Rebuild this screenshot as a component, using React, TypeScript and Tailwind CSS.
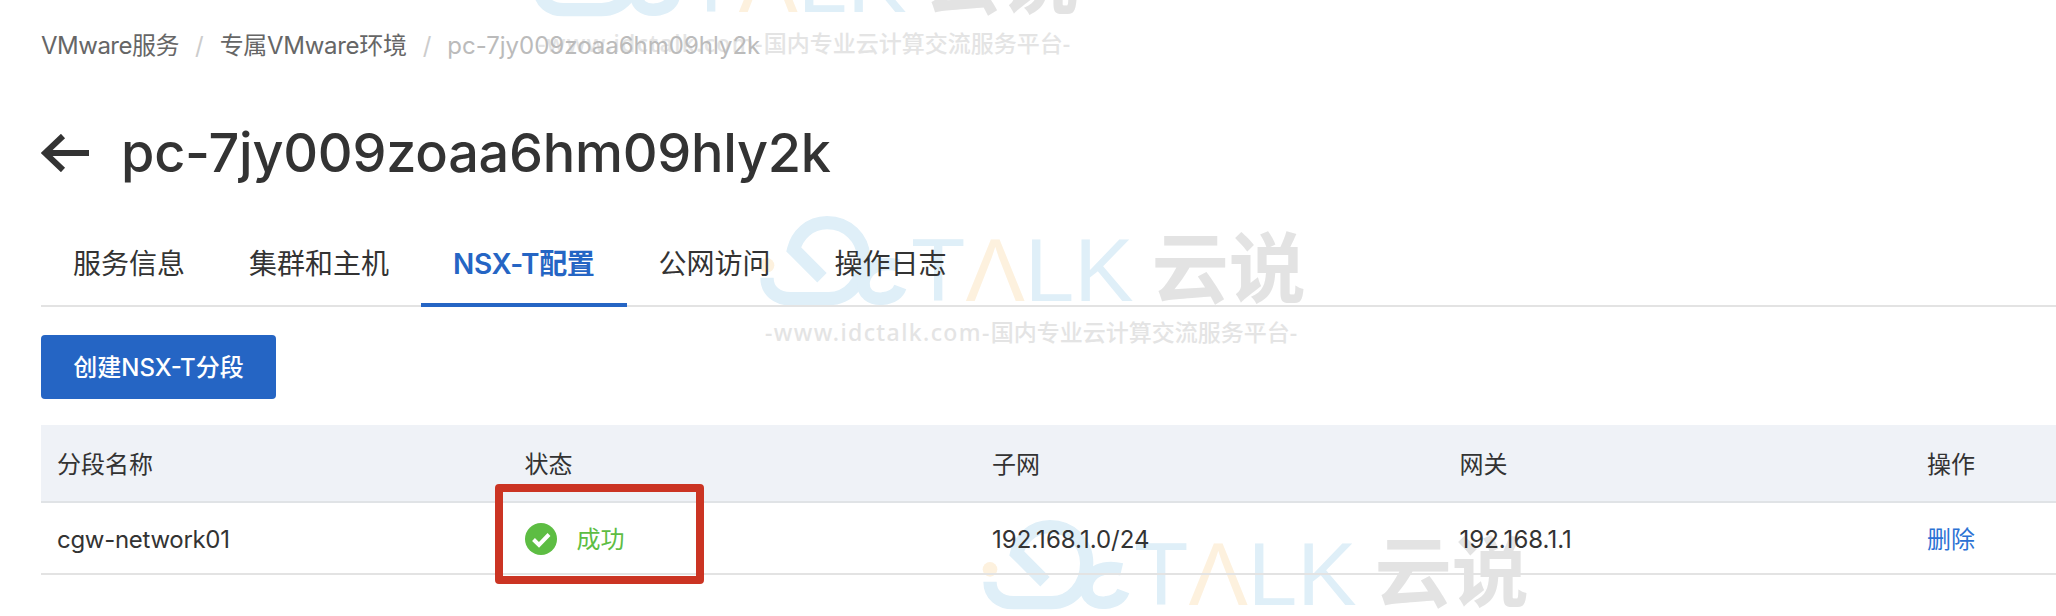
import { ReactNode } from "react";

const columns = ["分段名称", "状态", "子网", "网关", "操作"];
const tabs = ["服务信息", "集群和主机", "NSX-T配置", "公网访问", "操作日志"];

function Watermark({ className }: { className: string }) {
  return (
    <div className={"absolute flex flex-col pointer-events-none " + className}>
      <div className="flex h-[106px] items-start">
        <svg width="170" height="106" viewBox="0 0 510 318" fill="none" className="shrink-0">
          <circle cx="60" cy="178" r="22" fill="#fdf1de" />
          <path
            d="M60 215 C60 255 90 278 130 278 L245 278 C305 278 350 225 350 160 C350 95 300 50 240 50 C185 50 150 90 140 130 L225 215"
            stroke="#dfeff8"
            strokeWidth="40"
          />
          <path
            d="M455 178 C400 165 358 185 350 225 C345 265 375 280 405 278 C435 275 452 265 460 243"
            stroke="#dfeff8"
            strokeWidth="38"
          />
        </svg>
        <div className="-ml-[6px] mt-[13px] flex font-['Liberation_Sans',sans-serif] text-[89px] leading-[102px] text-[#dfeff8]">
          <span>T</span>
          <span className="text-[#fdf1de]">Λ</span>
          <span>LK</span>
        </div>
        <div className="ml-[18px] mt-[13px] whitespace-nowrap font-['Noto_Sans_CJK_SC',sans-serif] text-[77px] font-bold leading-[90px] text-[#e3e3e3]">
          云说
        </div>
      </div>
      <div className="mt-[6px] ml-[18px] whitespace-nowrap font-['Noto_Sans','Noto_Sans_CJK_SC',sans-serif] text-[23px] font-medium leading-[28px] text-[#e4e4e4]">
        <span className="tracking-[1.4px]">-www.idctalk.com-</span>国内专业云计算交流服务平台-
      </div>
    </div>
  );
}

function Cell({ children }: { children: ReactNode }) {
  return <div className="flex items-center px-[16px] pt-[4px]">{children}</div>;
}

export default function App() {
  return (
    <div className="relative h-[616px] w-full overflow-hidden bg-white font-['Inter','Noto_Sans_CJK_SC',sans-serif] text-[#333]">
      <Watermark className="left-[520px] -top-[83px]" />
      <Watermark className="left-[747px] top-[206px]" />
      <Watermark className="left-[970px] top-[510px]" />

      <div className="relative flex flex-col pl-[41px] pt-[29px]">
        <div className="flex h-[32px] items-center pt-[2px] text-[24px]">
          <span className="tracking-[-0.5px] text-[#666]">VMware服务</span>
          <span className="mx-[16px] text-[#ccc]">/</span>
          <span className="tracking-[-0.3px] text-[#666]">专属VMware环境</span>
          <span className="mx-[16px] text-[#ccc]">/</span>
          <span className="text-[#bbb]">pc-7jy009zoaa6hm09hly2k</span>
        </div>

        <div className="mt-[56px] flex h-[72px] items-center">
          <svg width="50" height="38" viewBox="0 0 50 38" fill="none" className="shrink-0 text-[#333]">
            <path d="M48 19 L4 19 M22 2 L4 19 L22 36" stroke="currentColor" strokeWidth="6" />
          </svg>
          <h1 className="ml-[30px] text-[54px] font-medium leading-[72px] tracking-[-0.25px]">pc-7jy009zoaa6hm09hly2k</h1>
        </div>

        <div className="mt-[32px] flex h-[86px] border-b-2 border-[#e3e3e3]">
          {tabs.map((tab, i) => (
            <div
              key={tab}
              className={
                i === 2
                  ? "relative flex h-[84px] items-center px-[32px] pt-[2px] text-[28px] font-semibold tracking-[-0.3px] text-[#2565c4]"
                  : "flex h-[84px] items-center px-[32px] pt-[2px] text-[28px]"
              }
            >
              {tab}
              {i === 2 && <div className="absolute inset-x-0 -bottom-[2px] h-[4px] bg-[#2565c4]" />}
            </div>
          ))}
        </div>

        <button className="mt-[28px] flex h-[64px] w-[235px] items-center justify-center rounded-[4px] bg-[#2565c4] pt-[2px] text-[24px] font-medium text-white">
          创建NSX-T分段
        </button>

        <div className="relative mt-[26px] text-[24px]">
          <div className="grid h-[78px] grid-cols-[repeat(5,467.5px)] border-b-2 border-[#e0e3e6] bg-[#eff2f7]">
            {columns.map((c) => (
              <Cell key={c}>{c}</Cell>
            ))}
          </div>
          <div className="grid h-[72px] grid-cols-[repeat(5,467.5px)] border-b-2 border-[#e3e3e3]">
            <Cell>
              <span className="tracking-[-0.3px]">cgw-network01</span>
            </Cell>
            <Cell>
              <svg width="32" height="32" viewBox="0 0 32 32" className="-mt-[2px] shrink-0">
                <circle cx="16" cy="16" r="16" fill="#5dbd43" />
                <path d="M8.5 16.5 L14 22 L24 11.5" fill="none" stroke="#fff" strokeWidth="4" />
              </svg>
              <span className="ml-[20px] text-[#5dbd43]">成功</span>
            </Cell>
            <Cell>192.168.1.0/24</Cell>
            <Cell>192.168.1.1</Cell>
            <Cell>
              <span className="text-[#2c72d4]">删除</span>
            </Cell>
          </div>
          <div className="absolute left-[454px] top-[59px] h-[100px] w-[209px] rounded-[4px] border-8 border-[#cb3423]" />
        </div>
      </div>
    </div>
  );
}
